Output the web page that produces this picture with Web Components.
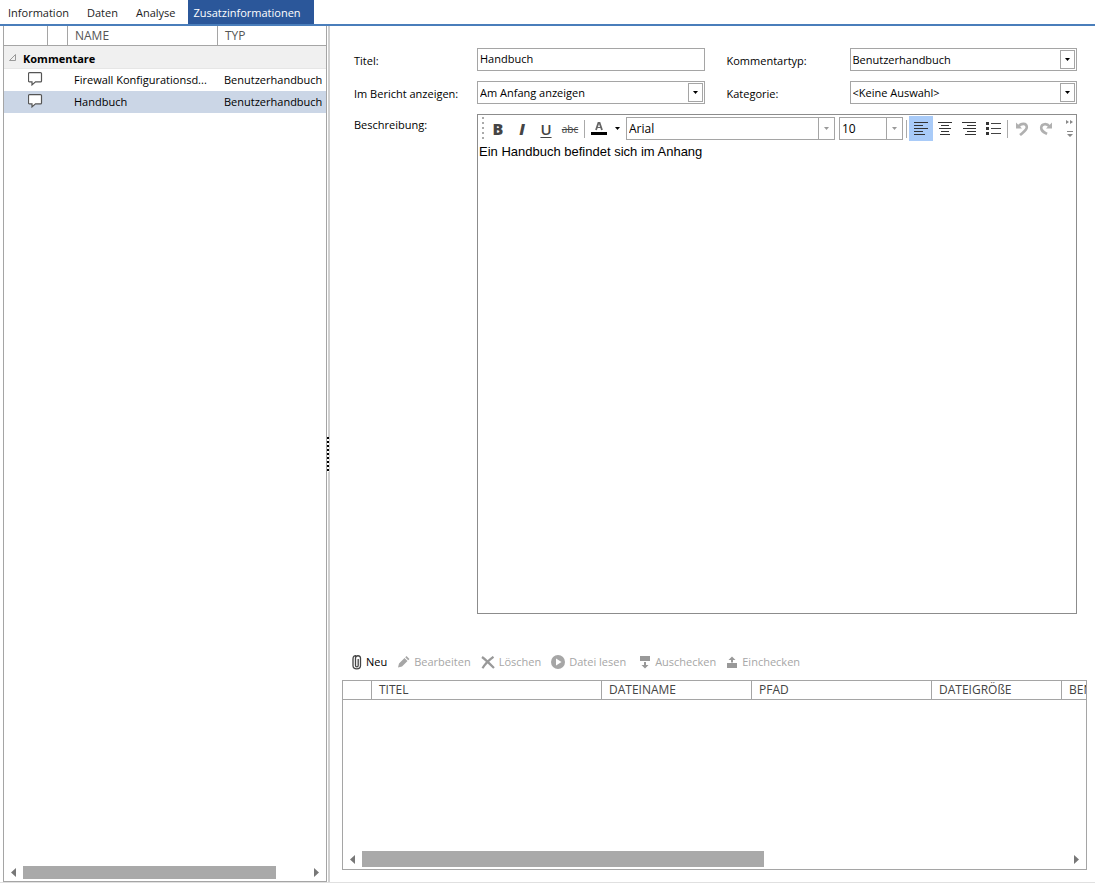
<!DOCTYPE html>
<html lang="de">
<head>
<meta charset="utf-8">
<title>Zusatzinformationen</title>
<style>
  html, body { margin: 0; height: 100%; }
  body {
    --head: 12px;
    --line: #a5a5a5;
    --accent: #2b579a;
    font: 11px/16px "Open Sans", "Noto Sans", sans-serif;
    color: #000;
    background: #fff;
  }
</style>
</head>
<body>
<app-shell></app-shell>

<script>
const define = (name, html, setup) => {
  const tpl = document.createElement('template');
  tpl.innerHTML = `<style>*{box-sizing:border-box}button,input,select,textarea{font:inherit;color:inherit;margin:0}</style>` + html;
  customElements.define(name, class extends HTMLElement {
    constructor() {
      super();
      this.attachShadow({ mode: 'open' }).append(tpl.content.cloneNode(true));
    }
    connectedCallback() { if (setup) setup(this, this.shadowRoot); }
  });
};

define('tab-bar', `
<style>
  :host { display: block; border-bottom: 2px solid #4a7ebb; }
  nav { display: flex; height: 24px; }
  a { padding: 5px 5px 0; color: #1c1c1c; text-decoration: none; white-space: nowrap; margin-left: 3px; width: max-content; }
  a + a { margin-left: 8px; }
  a.on { background: var(--accent); color: #fff; padding-right: 13px; }
</style>
<nav><a href="#information">Information</a><a href="#daten">Daten</a><a href="#analyse">Analyse</a><a class="on" href="#zusatz" aria-current="page">Zusatzinformationen</a></nav>`);

define('scroll-strip', `
<style>
  :host { display: flex; align-items: center; gap: 7px; padding: 0 7px; height: var(--strip, 20px); }
  .track { flex: 1; height: var(--thumb-height, 13px); }
  .thumb { width: var(--thumb, 50%); height: 100%; background: #a9a9a9; }
  svg { width: 5px; height: 9px; fill: #777; flex: none; }
</style>
<svg viewBox="0 0 5 9"><path d="M5 0v9L0 4.5z"/></svg>
<div class="track"><div class="thumb"></div></div>
<svg viewBox="0 0 5 9"><path d="M0 0v9l5-4.500z"/></svg>`);

define('comment-icon', `
<style>:host { display: block; height: 16px; } svg { display: block; margin-left: 24px; }</style>
<svg width="15" height="14" viewBox="0 0 15 14" fill="#fff" stroke="#555" stroke-width="1.200"><path d="M1.500 .6h11q1 0 1 1v7.300q0 1-1 1H7.500l-3.500 3v-3H1.500q-1 0-1-1V1.600q0-1 1-1z"/></svg>`);

define('comment-list', `
<style>
  :host { display: flex; flex-direction: column; border: 1px solid var(--line); border-top: 0; overflow: hidden; }
  .body { flex: 1; }
  table { width: 100%; table-layout: fixed; border-collapse: separate; border-spacing: 0; }
  th, td { padding: 0; white-space: nowrap; overflow: hidden; text-align: left; }
  thead th { height: 20px; font-size: var(--head); font-weight: 400; color: #555; border-bottom: 1px solid var(--line); border-right: 1px solid var(--line); padding-left: 7px; }
  thead th:last-child { border-right: 0; }
  tbody th { height: 23px; background: #f0f0f0; font-weight: 700; border-bottom: 1px solid #e6e6e6; padding-top: 3px; }
  tbody th svg { margin: 0 7px 5px 5px; vertical-align: middle; }
  td { height: 22px; }
  td:nth-child(2) { padding-left: 6px; }
  td:nth-child(3) { padding-left: 6px; }
  tr.sel td { background: #cbd6e6; }
</style>
<div class="body"><table>
<colgroup><col style="width:44px"><col style="width:20px"><col style="width:150px"><col></colgroup>
<thead><tr><th></th><th></th><th>NAME</th><th>TYP</th></tr></thead>
<tbody>
<tr><th colspan="4"><svg width="7" height="7" viewBox="0 0 7 7" fill="none" stroke="#999"><path d="M6.500 .5v6h-6z"/></svg>Kommentare</th></tr>
<tr><td colspan="2"><comment-icon></comment-icon></td><td>Firewall Konfigurationsd...</td><td>Benutzerhandbuch</td></tr>
<tr class="sel"><td colspan="2"><comment-icon></comment-icon></td><td>Handbuch</td><td>Benutzerhandbuch</td></tr>
</tbody></table></div>
<scroll-strip style="--thumb:89%;--strip:18px"></scroll-strip>`);

define('split-handle', `
<style>
  :host { display: flex; align-items: center; justify-content: flex-start; width: 3px; border-right: 2px solid #d0d0d0; cursor: col-resize; margin-right: 1px; }
  i { flex: none; width: 2px; height: 35px; background: repeating-linear-gradient(#000 0 2px, #fff 2px 4px); }
</style><i></i>`);

const fieldCss = `
  :host { display: grid; grid-template-columns: 123px 1fr; }
  label { padding-top: 5px; white-space: nowrap; }`;

define('text-field', `
<style>${fieldCss}
  input { width: 100%; height: 23px; border: 1px solid var(--line); padding: 0 2px 2px; outline: 0; }
</style>
<label for="c"></label><input id="c" type="text">`, (el, r) => {
  r.querySelector('label').textContent = el.getAttribute('label');
  r.querySelector('input').value = el.getAttribute('value');
});

define('combo-field', `
<style>${fieldCss}
  .box { display: grid; grid-template-columns: 1fr 15px; align-items: center; height: 23px; border: 1px solid var(--line); padding-right: 1px; }
  select { grid-area: 1/1/2/3; width: 100%; height: 21px; appearance: none; border: 0; background: none; padding: 0 18px 0 2px; outline: 0; }
  .btn { grid-area: 1/2; height: 19px; border: 1px solid var(--line); display: grid; place-items: center; pointer-events: none; }
</style>
<label for="c"></label>
<div class="box"><select id="c"><option></option></select><span class="btn"><svg width="5" height="3"><path d="M0 0h5L2.500 3z"/></svg></span></div>`, (el, r) => {
  r.querySelector('label').textContent = el.getAttribute('label');
  r.querySelector('option').textContent = el.getAttribute('value');
});

define('format-bar', `
<style>
  :host { display: flex; align-items: center; height: 27px; padding: 0 1px 0 4px; color: #444; }
  .grip { width: 2px; height: 23px; background: repeating-linear-gradient(#aaa 0 2px, transparent 2px 5px); margin-right: 2px; }
  button { width: 24px; height: 25px; border: 0; padding: 0; background: none; display: grid; place-items: center; flex: none; }
  button.on { background: #a9cbf8; }
  .b { font-weight: 800; font-size: 16px; }
  .i { font-weight: 800; font-size: 16px; font-style: italic; }
  .u { font-weight: 600; font-size: 15px; text-decoration: underline; text-underline-offset: 2px; }
  .s { font-size: 10px; text-decoration: line-through; }
  .sep { width: 1px; height: 18px; background: #aaa; margin: 0 2px; flex: none; }
  .drop { width: 13px; margin-right: 2px; }
  .pick { display: grid; grid-template-columns: 1fr 16px; height: 23px; border: 1px solid var(--line); color: #000; font-size: var(--head); }
  .font { flex: 1; margin-right: 4px; }
  .size { width: 64px; margin-right: 1px; }
  select { grid-area: 1/1/2/3; width: 100%; height: 21px; appearance: none; border: 0; background: none; padding: 0 18px 0 2px; }
  .pick span { grid-area: 1/2; border-left: 1px solid var(--line); display: grid; place-items: center; pointer-events: none; }
  .more { width: 12px; margin-left: 5px; }
</style>
<span class="grip"></span>
<button class="b" aria-label="Fett">B</button><button class="i" aria-label="Kursiv">I</button><button class="u" aria-label="Unterstrichen">U</button><button class="s" aria-label="Durchgestrichen">abc</button>
<span class="sep"></span>
<button aria-label="Schriftfarbe"><svg width="16" height="14"><path d="M5 8 7.400 1h1.200l2.400 7" fill="none" stroke="#666" stroke-width="1.800"/><path d="M5.500 5.500h5" stroke="#666"/><path d="M0 10h16v3H0z" fill="#000"/></svg></button>
<button class="drop" aria-label="Farbauswahl"><svg width="5" height="3"><path d="M0 0h5L2.500 3z" fill="#000"/></svg></button>
<div class="pick font"><select aria-label="Schriftart"><option>Arial</option></select><span><svg width="5" height="3"><path d="M0 0h5L2.500 3z" fill="#999"/></svg></span></div>
<div class="pick size"><select aria-label="Schriftgrad"><option>10</option></select><span><svg width="5" height="3"><path d="M0 0h5L2.500 3z" fill="#999"/></svg></span></div>
<span class="sep"></span>
<button class="on" aria-label="Linksbündig"><svg width="15" height="14" stroke="#333"><path d="M0 .5h14M0 3.500h9M0 6.500h14M0 9.500h9M0 12.500h11"/></svg></button>
<button aria-label="Zentriert"><svg width="14" height="14" stroke="#333"><path d="M0 .5h14M3 3.500h8M1 6.500h12M3 9.500h8M2 12.500h10"/></svg></button>
<button aria-label="Rechtsbündig"><svg width="14" height="14" stroke="#333"><path d="M0 .5h14M5 3.500h9M1 6.500h13M5 9.500h9M3 12.500h11"/></svg></button>
<button aria-label="Aufzählung"><svg width="15" height="13"><path d="M0 0h3v3H0zM0 5h3v3H0zM0 10h3v3H0z" fill="#333"/><path d="M5 1.500h10M5 6.500h10M5 11.500h10" stroke="#444"/></svg></button>
<span class="sep"></span>
<button aria-label="Rückgängig"><svg width="14" height="14" fill="none" stroke="#b0b0b0" stroke-width="2.600"><path d="M3.500 4.500C6 1 11.500 .8 11.800 5 12 8 9 9.500 5 13"/><path d="M1 .5v6h6z" fill="#b0b0b0" stroke="none"/></svg></button>
<button aria-label="Wiederholen"><svg width="14" height="14" fill="none" stroke="#b0b0b0" stroke-width="2.600"><path d="M10.500 4.500C8 1 2.500 1.500 2.200 5.500 2 9 4.500 10 8 12"/><path d="M13 .5v6H7z" fill="#b0b0b0" stroke="none"/></svg></button>
<button class="more" aria-label="Weitere"><svg width="9" height="18" fill="#888"><path d="M1 0l3 2-3 2zM5 0l3 2-3 2zM2 11h6v1H2zM2 14h6l-3 3z"/></svg></button>`);

define('rich-editor', `
<style>
  :host { display: grid; grid-template-columns: 123px 1fr; }
  label { padding-top: 3px; }
  .frame { display: flex; flex-direction: column; border: 1px solid #8c8c8c; min-width: 0; }
  textarea { flex: 1; width: 100%; border: 0; outline: 0; resize: none; padding: 2px 1px; font: 13px/16px "Liberation Sans", Arial, sans-serif; overflow: hidden; }
</style>
<label for="t">Beschreibung:</label>
<div class="frame"><format-bar></format-bar><textarea id="t">Ein Handbuch befindet sich im Anhang</textarea></div>`);

define('tool-button', `
<style>
  :host { display: block; color: #a6a6a6; }
  :host([active]) { color: #000; }
  button { display: flex; align-items: center; gap: 4px; border: 0; padding: 0; background: none; white-space: nowrap; }
  ::slotted(svg) { display: block; flex: none; }
</style>
<button><slot name="icon"></slot><slot></slot></button>`);

define('file-actions', `
<style>:host { display: flex; gap: 10px; height: 18px; align-items: center; padding-left: 10px; }
 tool-button:nth-of-type(5) { margin-left: 3px; }</style>
<tool-button active><svg slot="icon" width="10" height="15" viewBox="0 0 10 15" fill="none" stroke="#444" stroke-width="1.300"><path d="M1 3.500v7c0 4.500 7.500 4.500 7.500 0V3c0-3-5-3-5 0v7.500c0 1.700 2.700 1.700 2.700 0V4M1 4c0-3 1.500-3.300 3-3.300"/></svg>Neu</tool-button>
<tool-button><svg slot="icon" width="13" height="12" viewBox="0 0 13 12" fill="#a6a6a6"><path d="M1 11.500l1-4L7.500 2l3 3L5 10.500zM8.200 1.300L9.500 0l3 3-1.300 1.300z"/></svg>Bearbeiten</tool-button>
<tool-button><svg slot="icon" width="14" height="13" viewBox="0 0 14 13" fill="none" stroke="#999" stroke-width="2.200"><path d="M1 1c4 3 8 7 12 11M12.500 .8C8 4 4 8 1.500 12.200"/></svg>Löschen</tool-button>
<tool-button><svg slot="icon" width="14" height="14" viewBox="0 0 14 14"><circle cx="7" cy="7" r="7" fill="#a6a6a6"/><path d="M5 3.500v7L10.500 7z" fill="#fff"/></svg>Datei lesen</tool-button>
<tool-button><svg slot="icon" width="12" height="13" viewBox="0 0 12 13" fill="#999"><path d="M1 0h10v5H1zM5 6h2v3h2.500L6 12.500 2.500 9H5z"/></svg>Auschecken</tool-button>
<tool-button><svg slot="icon" width="12" height="13" viewBox="0 0 12 13" fill="#999"><path d="M1 7h10v5H1zM5 6.500V4H2.500L6 .5 9.500 4H7v2.500z"/></svg>Einchecken</tool-button>`);

define('file-table', `
<style>
  :host { display: flex; flex-direction: column; height: 190px; border: 1px solid var(--line); overflow: hidden; }
  .body { flex: 1; overflow: hidden; }
  table { table-layout: fixed; width: 819px; border-collapse: separate; border-spacing: 0; font-size: var(--head); }
  th { height: 19px; padding: 0 0 1px 7px; font-weight: 400; text-align: left; color: #444; border-right: 1px solid var(--line); border-bottom: 1px solid var(--line); }
</style>
<div class="body"><table>
<colgroup><col style="width:29px"><col style="width:230px"><col style="width:150px"><col style="width:180px"><col style="width:130px"><col></colgroup>
<thead><tr><th></th><th>TITEL</th><th>DATEINAME</th><th>PFAD</th><th>DATEIGRÖßE</th><th>BEN</th></tr></thead></table></div>
<scroll-strip style="--thumb:57%;--thumb-height:16px"></scroll-strip>`);

define('app-shell', `
<style>
  :host { display: flex; flex-direction: column; min-height: 100vh; }
  main { flex: 1; display: flex; padding-left: 3px; border-bottom: 1px solid #e0e0e0; }
  comment-list { flex: 0 0 324px; }
  section { flex: 1; min-width: 0; display: flex; flex-direction: column; padding: 22px 8px 12px 11px; }
  .form { flex: 1; display: grid; grid-template: auto auto 1fr / 1fr 1fr; gap: 10px 22px; padding: 0 10px 0 12px; }
  rich-editor { grid-column: 1 / 3; }
  file-actions { margin: 39px 0 9px; }
</style>
<tab-bar></tab-bar>
<main>
  <comment-list></comment-list>
  <split-handle></split-handle>
  <section>
    <div class="form">
      <text-field label="Titel:" value="Handbuch"></text-field>
      <combo-field label="Kommentartyp:" value="Benutzerhandbuch"></combo-field>
      <combo-field label="Im Bericht anzeigen:" value="Am Anfang anzeigen"></combo-field>
      <combo-field label="Kategorie:" value="&lt;Keine Auswahl&gt;"></combo-field>
      <rich-editor></rich-editor>
    </div>
    <file-actions></file-actions>
    <file-table></file-table>
  </section>
</main>`);
</script>
</body>
</html>
